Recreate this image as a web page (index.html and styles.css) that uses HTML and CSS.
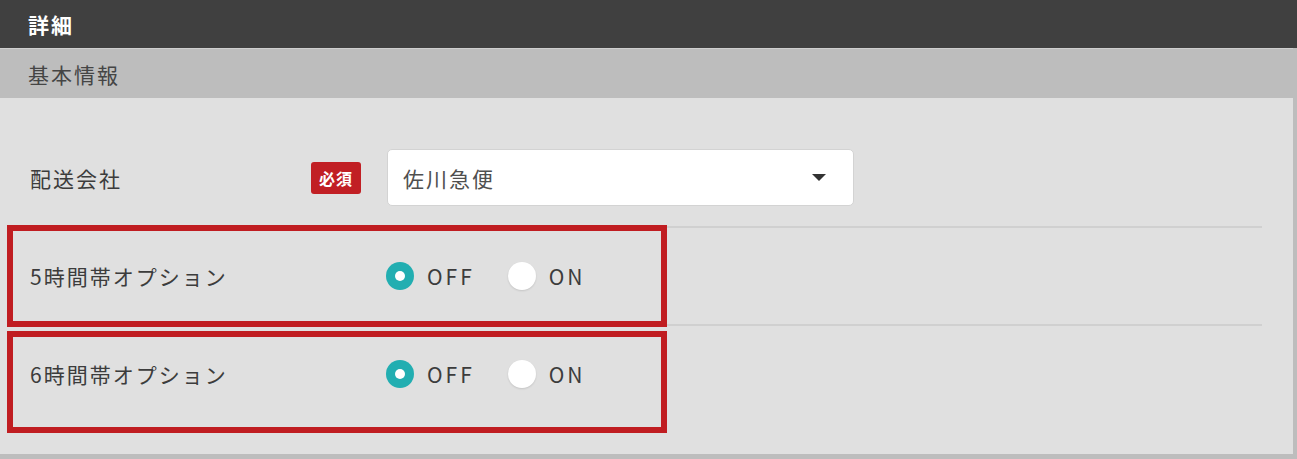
FILE: index.html
```html
<!DOCTYPE html>
<html lang="ja">
<head>
<meta charset="utf-8">
<title>詳細</title>
<link rel="stylesheet" href="styles.css">
</head>
<body>
<div class="page">
  <header class="topbar">詳細</header>
  <section class="panel">
    <div class="panel-head">基本情報</div>
    <div class="panel-body">
      <div class="row">
        <div class="label-col">
          <span class="label">配送会社</span>
          <span class="badge">必須</span>
        </div>
        <div class="select">
          <span class="select-text">佐川急便</span>
          <span class="caret"></span>
        </div>
      </div>
      <div class="row">
        <div class="highlight hl-a"></div>
        <div class="label-col">
          <span class="label">5時間帯オプション</span>
        </div>
        <div class="radios">
          <span class="radio checked"></span><span class="radio-text">OFF</span>
          <span class="radio"></span><span class="radio-text">ON</span>
        </div>
      </div>
      <div class="row last">
        <div class="highlight hl-b"></div>
        <div class="label-col">
          <span class="label">6時間帯オプション</span>
        </div>
        <div class="radios">
          <span class="radio checked"></span><span class="radio-text">OFF</span>
          <span class="radio"></span><span class="radio-text">ON</span>
        </div>
      </div>
    </div>
  </section>
</div>
</body>
</html>
```
FILE: styles.css
```css
* { box-sizing: border-box; }
html, body { margin: 0; padding: 0; }
body {
  width: 1297px;
  height: 459px;
  overflow: hidden;
  background: #bdbdbd;
  font-family: "Noto Sans CJK JP", "Noto Sans", sans-serif;
  font-size: 21px;
  letter-spacing: 2px;
  color: #3c3c3c;
}
.topbar {
  height: 48px;
  background: #404040;
  color: #fff;
  font-weight: bold;
  padding-left: 28px;
  display: flex;
  align-items: center;
}
.panel { width: 1293px; }
.panel-head {
  height: 50px;
  background: #bdbdbd;
  border-top: 1px solid #cfcfcf;
  color: #454545;
  padding-left: 28px;
  display: flex;
  align-items: center;
}
.panel-body {
  background: #e0e0e0;
  height: 356px;
  padding: 51px 31px 0 8px;
}
.row {
  position: relative;
  display: flex;
  align-items: center;
  gap: 26px;
  min-height: 98px;
  padding: 20px 0 20px 22px;
  border-bottom: 2px solid #d0d0d0;
}
.row:first-child { min-height: 0; padding-top: 0; }
.row.last { border-bottom: none; min-height: 96px; }
.label-col {
  width: 331px;
  display: flex;
  align-items: center;
  justify-content: space-between;
}
.label { color: #3c3c3c; }
.badge {
  width: 50px;
  height: 32px;
  background: #c11f24;
  color: #fff;
  font-size: 16px;
  font-weight: bold;
  letter-spacing: 1px;
  border-radius: 3px;
  display: flex;
  align-items: center;
  justify-content: center;
}
.select {
  width: 467px;
  height: 57px;
  background: #fff;
  border: 1px solid #d3d3d3;
  border-radius: 5px;
  display: flex;
  align-items: center;
  justify-content: space-between;
  padding: 0 27px 0 15px;
  color: #4f4f4f;
}
.caret {
  width: 0;
  height: 0;
  border-left: 7px solid transparent;
  border-right: 7px solid transparent;
  border-top: 7px solid #333;
}
.radios {
  display: flex;
  align-items: center;
  margin-left: -1px;
}
.radio {
  width: 28px;
  height: 28px;
  border-radius: 50%;
  background: #fff;
  box-shadow: 0 1px 2px rgba(0,0,0,0.12);
  margin-right: 13px;
}
.radio.checked {
  background: #22aeb1;
  box-shadow: none;
  display: flex;
  align-items: center;
  justify-content: center;
}
.radio.checked::after {
  content: "";
  width: 10px;
  height: 10px;
  border-radius: 50%;
  background: #fff;
}
.radio-text { color: #3c3c3c; letter-spacing: 3px; margin-right: 33px; }
.highlight {
  position: absolute;
  left: -1px;
  width: 660px;
  height: 102px;
  border: 6px solid #c01d21;
  pointer-events: none;
}
.hl-a { top: -3px; }
.hl-b { top: 5px; }
```
